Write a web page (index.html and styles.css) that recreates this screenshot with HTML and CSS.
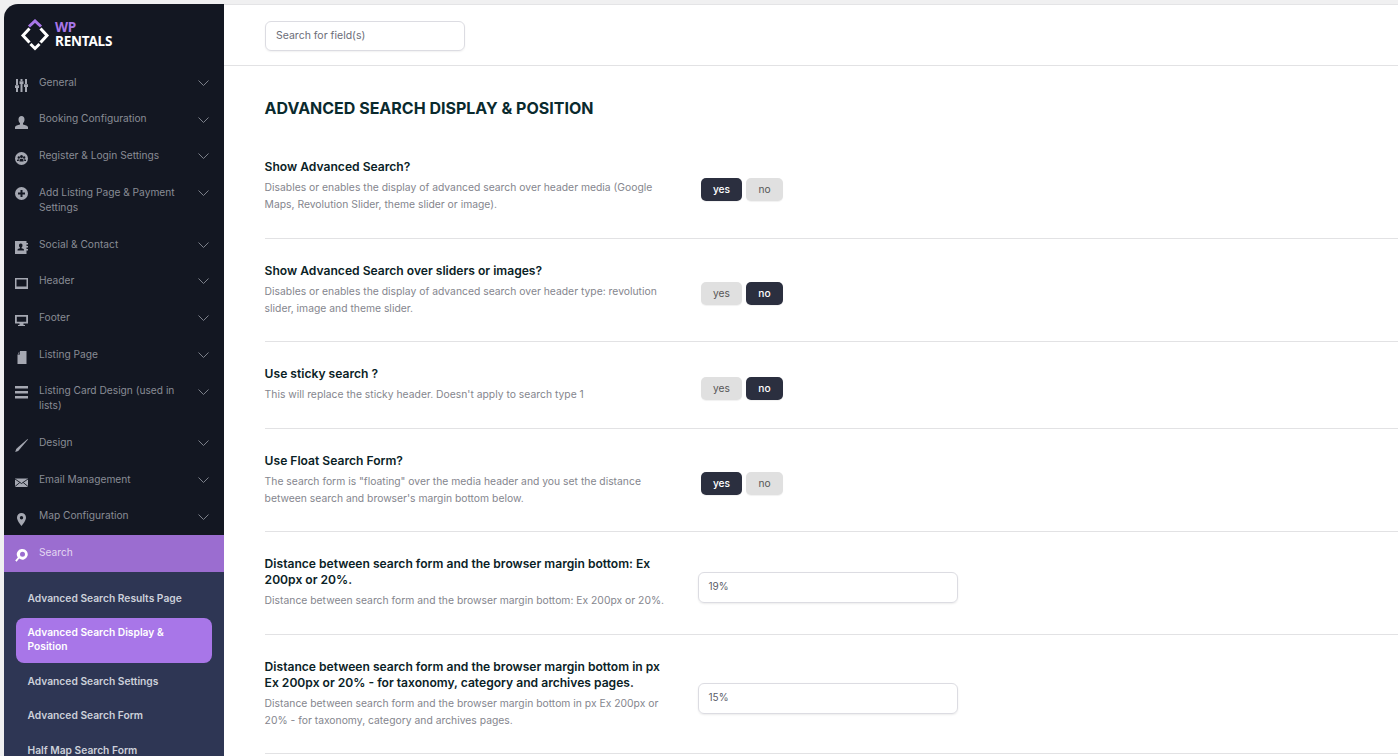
FILE: index.html
```html
<!DOCTYPE html>
<html lang="en">
<head>
<meta charset="utf-8">
<title>WP Rentals Options</title>
<link rel="stylesheet" href="styles.css">
</head>
<body>
<div class="app">
  <aside class="sidebar">
    <div class="logo">
      <svg class="logo-mark" viewBox="0 0 30 32" width="30" height="32"><path class="lm lm-top" d="M9 7.500L15 2l6 5.500"/><path class="lm" d="M9.500 9.500L3 16.500l6.500 7M20.500 9.500L27 16.500l-6.500 7M10.500 25l4.500 4.500 4.500-4.500"/></svg>
      <div class="logo-text"><span class="logo-wp">WP</span><span>RENTALS</span></div>
    </div>
    <nav class="menu">
      <a class="item"><svg class="ic" viewBox="0 0 13 13"><path d="M1 0h2v6H1zM1 9h2v4H1zM0 6.300h4v2.700H0zM5.500 0h2v2H5.500zM5.500 5h2v8H5.500zM4.500 2.300h4v2.700h-4zM10 0h2v5h-2zM10 8h2v5h-2zM9 5.300h4V8H9z"/></svg><span class="label">General</span><svg class="chev" viewBox="0 0 11 6"><path d="M.5.500l5 5 5-5"/></svg></a>
      <a class="item"><svg class="ic" viewBox="0 0 13 13"><path d="M6.500 0C8.400 0 9.500 1.500 9.500 3.500c0 1.600-.7 3-1.500 3.700v1.200c2.200.5 5 1.300 5 2.800V13H0v-1.800c0-1.500 2.800-2.300 5-2.800V7.200C4.200 6.500 3.500 5.100 3.500 3.500 3.500 1.500 4.600 0 6.500 0z"/></svg><span class="label">Booking Configuration</span><svg class="chev" viewBox="0 0 11 6"><path d="M.5.500l5 5 5-5"/></svg></a>
      <a class="item"><svg class="ic" viewBox="0 0 13 13"><path fill-rule="evenodd" d="M6.500 0a6.500 6.500 0 1 1 0 13 6.500 6.500 0 0 1 0-13zM6.500 3a1.500 1.500 0 1 0 0 3 1.500 1.500 0 0 0 0-3zM3.800 4.300a1.200 1.200 0 1 0 0 2.400 1.200 1.200 0 0 0 0-2.400zM9.200 4.300a1.200 1.200 0 1 0 0 2.400 1.200 1.200 0 0 0 0-2.400zM4.500 9.500h4V8c0-.8-1-1.300-2-1.300s-2 .5-2 1.300zM2 9h1.800V7.200C2.900 7.200 2 7.700 2 8.200zM9.200 9H11v-.8c0-.5-.9-1-1.800-1z"/></svg><span class="label">Register &amp; Login Settings</span><svg class="chev" viewBox="0 0 11 6"><path d="M.5.500l5 5 5-5"/></svg></a>
      <a class="item"><svg class="ic ic-up" viewBox="0 0 13 13"><path fill-rule="evenodd" d="M6.500 0a6.500 6.500 0 1 1 0 13 6.500 6.500 0 0 1 0-13zM5.500 3v2.500H3v2h2.500V10h2V7.500H10v-2H7.500V3z"/></svg><span class="label">Add Listing Page &amp; Payment Settings</span><svg class="chev" viewBox="0 0 11 6"><path d="M.5.500l5 5 5-5"/></svg></a>
      <a class="item"><svg class="ic" viewBox="0 0 13 13"><path fill-rule="evenodd" d="M0 0h11.500v2H13v1.500h-1.500v1.500H13v1.500h-1.500V8H13v1.500h-1.500V13H0zM5.700 2.500a1.700 1.700 0 0 0-1.700 1.900c0 1 .5 1.700 1 2v.8c-1 .2-2.500.7-2.500 1.500v.8h6.500v-.8c0-.8-1.500-1.300-2.500-1.500v-.8c.5-.3 1-1 1-2a1.700 1.700 0 0 0-1.800-1.900z"/></svg><span class="label">Social &amp; Contact</span><svg class="chev" viewBox="0 0 11 6"><path d="M.5.500l5 5 5-5"/></svg></a>
      <a class="item"><svg class="ic" viewBox="0 0 13 13"><path fill-rule="evenodd" d="M0 1h13v11H0zM1.500 2.500v7h10v-7z"/></svg><span class="label">Header</span><svg class="chev" viewBox="0 0 11 6"><path d="M.5.500l5 5 5-5"/></svg></a>
      <a class="item"><svg class="ic" viewBox="0 0 13 13"><path fill-rule="evenodd" d="M0 1h13v8.500H8.500V11h1.500v1H3v-1h1.500V9.500H0zM1.800 2.800v5h9.400v-5z"/></svg><span class="label">Footer</span><svg class="chev" viewBox="0 0 11 6"><path d="M.5.500l5 5 5-5"/></svg></a>
      <a class="item"><svg class="ic" viewBox="0 0 13 13"><path d="M5 0h6.500v13H2.500V3.500H5z"/><path d="M3 2.800L4.300.5v2.300z"/></svg><span class="label">Listing Page</span><svg class="chev" viewBox="0 0 11 6"><path d="M.5.500l5 5 5-5"/></svg></a>
      <a class="item"><svg class="ic ic-up" viewBox="0 0 13 13"><path d="M0 0h13v2.500H0zM0 5h13v2.500H0zM0 10h13v2.500H0z"/></svg><span class="label">Listing Card Design (used in lists)</span><svg class="chev" viewBox="0 0 11 6"><path d="M.5.500l5 5 5-5"/></svg></a>
      <a class="item"><svg class="ic" viewBox="0 0 13 13"><path d="M12.600 0L13 .6 5.300 9.600 3.200 12 .2 13l1-3 2.400-2.200z"/></svg><span class="label">Design</span><svg class="chev" viewBox="0 0 11 6"><path d="M.5.500l5 5 5-5"/></svg></a>
      <a class="item"><svg class="ic" viewBox="0 0 13 13"><path d="M0 2.500h13v8.500H0z"/><path class="ic-cut" d="M0 3l6.500 4.500L13 3M0 10.500L4.800 6.500M13 10.500L8.200 6.500"/></svg><span class="label">Email Management</span><svg class="chev" viewBox="0 0 11 6"><path d="M.5.500l5 5 5-5"/></svg></a>
      <a class="item"><svg class="ic" viewBox="0 0 13 13"><path fill-rule="evenodd" d="M6.500 0a4.500 4.500 0 0 1 4.500 4.500c0 3-3 6.500-4.500 8.500C5 11 2 7.500 2 4.500A4.500 4.500 0 0 1 6.500 0zM6.500 3a1.700 1.700 0 1 0 0 3.400 1.700 1.700 0 0 0 0-3.400z"/></svg><span class="label">Map Configuration</span><svg class="chev" viewBox="0 0 11 6"><path d="M.5.500l5 5 5-5"/></svg></a>
      <a class="item item-open"><svg class="ic" viewBox="0 0 13 13"><path fill-rule="evenodd" d="M7.500 0a5.300 5.300 0 1 1-3.300 9.500L1.600 12.800.2 11.600l2.600-3.200A5.300 5.300 0 0 1 7.500 0zM7.500 2.800a2.500 2.500 0 1 0 0 5 2.500 2.500 0 0 0 0-5z"/></svg><span class="label">Search</span></a>
      <div class="submenu">
        <a class="sub">Advanced Search Results Page</a>
        <a class="sub sub-active">Advanced Search Display &amp; Position</a>
        <a class="sub">Advanced Search Settings</a>
        <a class="sub">Advanced Search Form</a>
        <a class="sub">Half Map Search Form</a>
      </div>
    </nav>
  </aside>
  <main class="main">
    <div class="topbar"><div class="search-box">Search for field(s)</div></div>
    <div class="content">
      <h1 class="page-title">Advanced Search Display &amp; Position</h1>
      <section class="row">
        <div class="info"><h2 class="title">Show Advanced Search?</h2><p class="desc">Disables or enables the display of advanced search over header media (Google Maps, Revolution Slider, theme slider or image).</p></div>
        <div class="toggle"><span class="btn on">yes</span><span class="btn">no</span></div>
      </section>
      <section class="row">
        <div class="info"><h2 class="title">Show Advanced Search over sliders or images?</h2><p class="desc">Disables or enables the display of advanced search over header type: revolution slider, image and theme slider.</p></div>
        <div class="toggle"><span class="btn">yes</span><span class="btn on">no</span></div>
      </section>
      <section class="row">
        <div class="info"><h2 class="title">Use sticky search ?</h2><p class="desc">This will replace the sticky header. Doesn't apply to search type 1</p></div>
        <div class="toggle"><span class="btn">yes</span><span class="btn on">no</span></div>
      </section>
      <section class="row">
        <div class="info"><h2 class="title">Use Float Search Form?</h2><p class="desc">The search form is "floating" over the media header and you set the distance between search and browser's margin bottom below.</p></div>
        <div class="toggle"><span class="btn on">yes</span><span class="btn">no</span></div>
      </section>
      <section class="row">
        <div class="info"><h2 class="title">Distance between search form and the browser margin bottom: Ex 200px or 20%.</h2><p class="desc">Distance between search form and the browser margin bottom: Ex 200px or 20%.</p></div>
        <div class="field">19%</div>
      </section>
      <section class="row">
        <div class="info"><h2 class="title">Distance between search form and the browser margin bottom in px Ex 200px or 20% - for taxonomy, category and archives pages.</h2><p class="desc">Distance between search form and the browser margin bottom in px Ex 200px or 20% - for taxonomy, category and archives pages.</p></div>
        <div class="field">15%</div>
      </section>
    </div>
  </main>
</div>
</body>
</html>
```
FILE: styles.css
```css
* { box-sizing: border-box; }
html, body { margin: 0; height: 100%; overflow: hidden; }
body { background: #f0f0f1; font-family: Inter, "Liberation Sans", sans-serif; }
.app { display: flex; height: 756px; padding: 4px 0 0 4px; }

.sidebar { width: 220px; flex: none; background: #131722; border-top-left-radius: 14px; overflow: hidden; }
.logo { height: 61px; padding: 13px 0 0 16px; display: flex; align-items: flex-start; gap: 5px; }
.logo-mark { flex: none; margin-top: 2px; }
.lm { fill: none; stroke: #fff; stroke-width: 3; }
.lm-top { stroke: #a876e8; }
.logo-text { display: flex; flex-direction: column; color: #fff; font-family: "Noto Sans", sans-serif; font-size: 13.5px; font-weight: 700; line-height: 14px; padding-top: 3px; letter-spacing: -.2px; }
.logo-wp { color: #a876e8; }

.item { position: relative; display: block; padding: 9.8px 40px 11.9px 35px; font-size: 10.2px; line-height: 15px; color: #898c95; }
.ic { position: absolute; left: 11px; top: 14px; width: 13px; height: 13px; fill: #a5a8b2; }
.ic-up { top: 12px; }
.ic-cut { fill: none; stroke: #131722; stroke-width: .9; }
.chev { position: absolute; right: 15px; top: 15px; width: 11px; height: 6px; fill: none; stroke: #7c808a; stroke-width: 1; }
.label { display: block; }
.item-open { background: #9b6dd0; color: #e4d8f2; }
.item-open .ic { fill: #fff; }

.submenu { background: #2e3654; padding: 9px 12px 0; }
.sub { display: block; padding: 10.1px 11.5px; font-size: 10.25px; font-weight: 600; line-height: 14px; color: #ccd0da; }
.sub-active { background: #a876e8; color: #fff; border-radius: 8px; padding: 7px 11.5px 10px; margin: 3px 0 1px; }

.main { flex: 1; min-width: 0; background: #fff; border-top: 1px solid #e4e4e6; }
.topbar { height: 61px; padding-top: 16px; border-bottom: 1px solid #e2e2e4; }
.search-box { margin-left: 41px; width: 200px; height: 30px; border: 1px solid #dcdce2; border-radius: 6px; padding: 0 10px; font-size: 10.5px; line-height: 27px; color: #6b6d78; box-shadow: 0 1px 2px rgba(0,0,0,.06); }

.content { padding-left: 40.6px; }
.page-title { margin: 0; padding-top: 32px; height: 69px; font-size: 16px; line-height: 20px; font-weight: 700; text-transform: uppercase; color: #0a2a2e; }
.row { display: flex; align-items: center; padding: 24px 0 25px; border-bottom: 1px solid #e2e2e4; }
.row:first-of-type { padding-bottom: 26px; }
.info { width: 404.4px; flex: none; }
.title { margin: 0 0 4px; font-size: 12.1px; line-height: 16.15px; font-weight: 600; color: #0a2226; }
.desc { margin: 0; font-size: 10.35px; line-height: 16.5px; color: #85868e; }
.toggle { display: grid; grid-template-columns: 41px 37px; gap: 4px; margin: 7.5px 0 0 32px; }
.btn { height: 23px; text-align: center; border-radius: 5px; background: #e0e0e0; color: #555; font-size: 10.2px; line-height: 22px; box-shadow: 0 1px 1px rgba(0,0,0,.06); }
.btn.on { background: #2b2f3f; color: #fff; font-weight: 500; }
.field { margin: 9.5px 0 0 29px; width: 260px; height: 31px; border: 1px solid #dcdce2; border-radius: 6px; padding: 0 9.5px; font-size: 10px; line-height: 27px; color: #5a5c68; box-shadow: 0 1px 2px rgba(0,0,0,.08); }
```
